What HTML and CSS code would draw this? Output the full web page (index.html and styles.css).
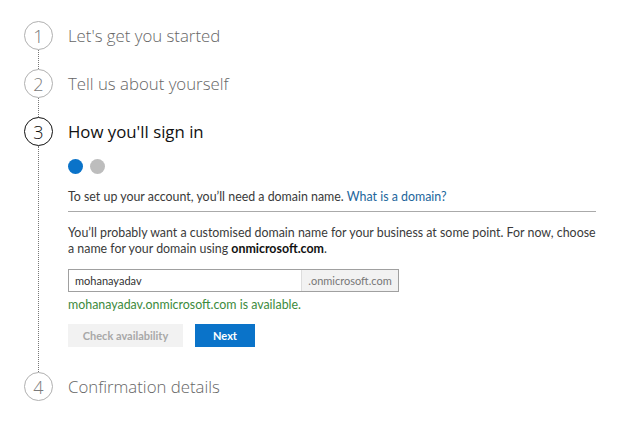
FILE: index.html
```html
<!DOCTYPE html>
<html>
<head>
<meta charset="utf-8">
<link rel="stylesheet" href="styles.css">
</head>
<body>
<div class="steps">
  <div class="step">
    <div class="rail"><div class="circle">1</div><div class="line"></div></div>
    <div class="body"><div class="title">Let's get you started</div></div>
  </div>
  <div class="step">
    <div class="rail"><div class="circle">2</div><div class="line"></div></div>
    <div class="body"><div class="title">Tell us about yourself</div></div>
  </div>
  <div class="step active">
    <div class="rail"><div class="circle">3</div><div class="line"></div></div>
    <div class="body">
      <div class="title">How you'll sign in</div>
      <div class="dots"><span class="dot on"></span><span class="dot"></span></div>
      <div class="intro">To set up your account, you’ll need a domain name. <a class="link" href="#">What is a domain?</a></div>
      <p class="para">You’ll probably want a customised domain name for your business at some point. For now, choose a name for your domain using <b>onmicrosoft.com</b>.</p>
      <div class="field"><span class="value">mohanayadav</span><span class="suffix">.onmicrosoft.com</span></div>
      <div class="ok">mohanayadav.onmicrosoft.com is available.</div>
      <div class="buttons"><span class="btn disabled">Check availability</span><span class="btn primary">Next</span></div>
    </div>
  </div>
  <div class="step last">
    <div class="rail"><div class="circle">4</div></div>
    <div class="body"><div class="title">Confirmation details</div></div>
  </div>
</div>
</body>
</html>
```
FILE: styles.css
```css
html, body { margin: 0; padding: 0; background: #fff; }
body { font-family: "Segoe UI", Lato, "Open Sans", sans-serif; color: #3a3a3a; }
.steps { padding: 21px 0 0 24px; }
.step { display: flex; gap: 15px; }
.rail { width: 29px; display: flex; flex-direction: column; align-items: center; flex: none; }
.circle {
  width: 29px; height: 29px; box-sizing: border-box; border-radius: 50%;
  border: 1.5px solid #b0b0b0; color: #7a7a7a;
  display: flex; align-items: center; justify-content: center;
  font-family: "Open Sans", sans-serif; font-weight: 300; font-size: 18px; flex: none;
}
.line { flex: 1; min-height: 19px; border-left: 1px dotted #777; }
.title { height: 29px; line-height: 29px; font-family: "Open Sans", sans-serif; font-weight: 300; font-size: 16.8px; color: #666; white-space: nowrap; }
.active .circle { border-color: #111; color: #111; }
.active .title { color: #111; font-weight: 400; }
.body { flex: 1; width: 528px; max-width: 528px; }
.dots { display: flex; gap: 7px; margin-top: 13px; }
.dot { width: 15px; height: 15px; border-radius: 50%; background: #bdbdbd; }
.dot.on { background: #0a73c9; }
.intro { margin-top: 15px; font-size: 12.4px; line-height: 16px; padding-bottom: 6px; border-bottom: 1px solid #aaa; }
.link { color: #22669c; text-decoration: none; }
.para { margin: 13px 0 0; font-size: 12.4px; line-height: 16px; }
.para b { color: #111; }
.field { margin-top: 12px; width: 331px; height: 23px; box-sizing: border-box; border: 1px solid #a0a0a0; display: flex; font-size: 11px; }
.value { flex: 1; padding-left: 6px; line-height: 21px; color: #333; }
.suffix { width: 96px; background: #f2f2f2; border-left: 1px solid #ddd; color: #777; line-height: 21px; text-align: center; }
.ok { margin-top: 5px; font-size: 12.4px; line-height: 16px; color: #3c8a3c; }
.buttons { display: flex; gap: 12px; margin-top: 11px; padding-bottom: 25px; }
.btn { height: 23px; line-height: 23px; font-size: 11px; font-weight: 700; text-align: center; }
.btn.disabled { width: 115px; background: #f2f2f2; color: #a8a8a8; }
.btn.primary { width: 60px; background: #0a73c9; color: #fff; }
```
